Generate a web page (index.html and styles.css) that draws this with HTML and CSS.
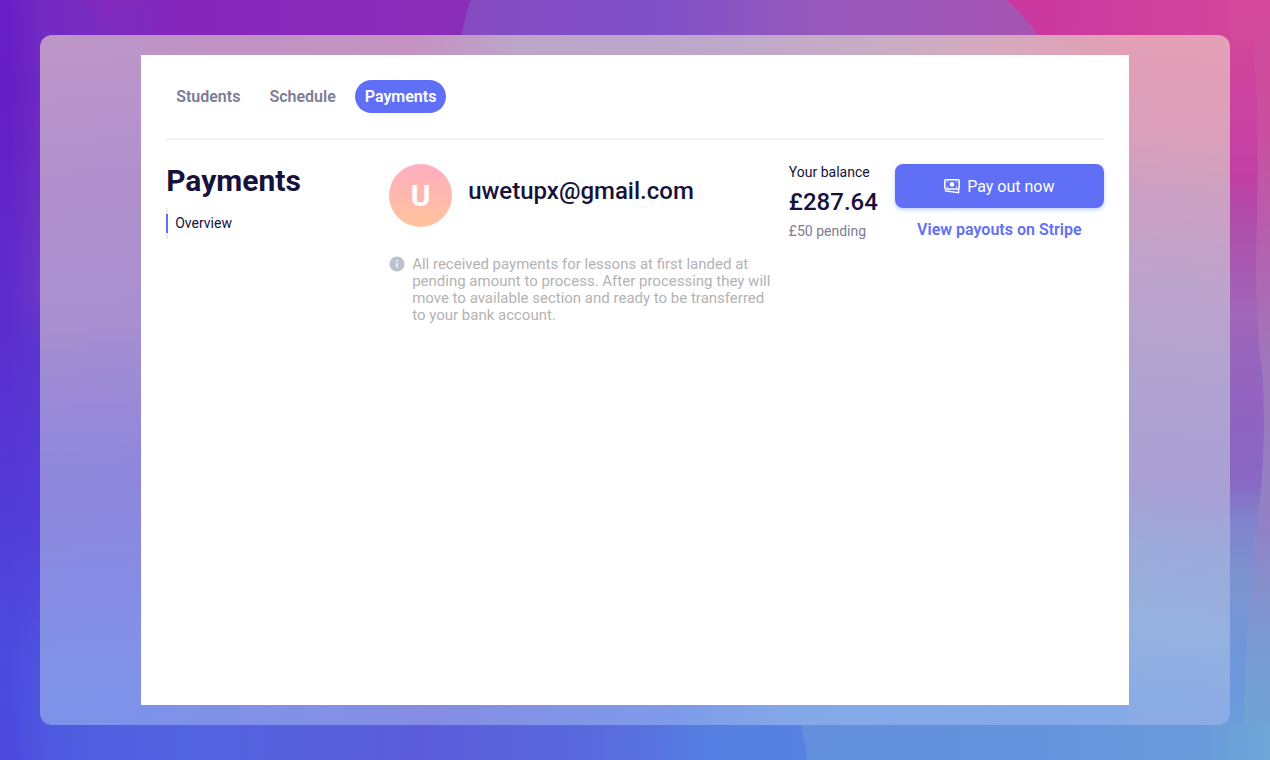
FILE: index.html
```html
<!DOCTYPE html>
<html lang="en">

<head>
    <meta charset="UTF-8" />
    <meta name="viewport" content="width=device-width, initial-scale=1" />
    <title>Payments</title>
    <link rel="stylesheet" href="styles.css">
</head>

<body>
    <!-- Wallpaper -->
    <svg class="wallpaper" viewBox="0 0 1270 760" preserveAspectRatio="none" aria-hidden="true">
        <defs>
            <linearGradient id="topColors" gradientUnits="userSpaceOnUse" x1="0" y1="0" x2="1270" y2="0">
                <stop offset="0" stop-color="#661cc6" />
                <stop offset="0.033" stop-color="#722ac3" />
                <stop offset="0.08" stop-color="#7a2cc0" />
                <stop offset="0.15" stop-color="#8526ba" />
                <stop offset="0.37" stop-color="#8a2eb8" />
            </linearGradient>
            <linearGradient id="topArc" gradientUnits="userSpaceOnUse" x1="460" y1="0" x2="1045" y2="0">
                <stop offset="0" stop-color="#864bc0" />
                <stop offset="0.32" stop-color="#7f50c8" />
                <stop offset="0.62" stop-color="#9659bb" />
                <stop offset="1" stop-color="#a654b2" />
            </linearGradient>
            <linearGradient id="pink" gradientUnits="userSpaceOnUse" x1="1020" y1="0" x2="1270" y2="20">
                <stop offset="0" stop-color="#c9379f" />
                <stop offset="1" stop-color="#d4489a" />
            </linearGradient>
            <linearGradient id="leftSide" x2="0" y2="1">
                <stop offset="0" stop-color="#681fc6" />
                <stop offset="0.12" stop-color="#651dc4" />
                <stop offset="0.4" stop-color="#5d2dcd" />
                <stop offset="0.68" stop-color="#523cd6" />
                <stop offset="0.86" stop-color="#4c4bde" />
                <stop offset="1" stop-color="#4c48e0" />
            </linearGradient>
            <linearGradient id="leftInner" x2="0" y2="1">
                <stop offset="0" stop-color="#722ac3" />
                <stop offset="0.15" stop-color="#6f2bc4" />
                <stop offset="0.38" stop-color="#6e38c4" />
                <stop offset="0.46" stop-color="#5c35d0" />
                <stop offset="0.7" stop-color="#533fd8" />
                <stop offset="0.9" stop-color="#5057e0" />
                <stop offset="1" stop-color="#4f57e0" />
            </linearGradient>
            <linearGradient id="fadeIn">
                <stop offset="0.2" stop-color="#000" />
                <stop offset="1" stop-color="#fff" />
            </linearGradient>
            <mask id="fadeInMask">
                <rect width="42" height="760" fill="url(#fadeIn)" />
            </mask>
            <linearGradient id="rightSide" x2="0" y2="1">
                <stop offset="0" stop-color="#d4489a" />
                <stop offset="0.18" stop-color="#c9509f" />
                <stop offset="0.3" stop-color="#b75fab" />
                <stop offset="0.48" stop-color="#9e78bb" />
                <stop offset="0.7" stop-color="#9083c5" />
                <stop offset="0.8" stop-color="#8094cf" />
                <stop offset="0.9" stop-color="#749fd4" />
                <stop offset="1" stop-color="#70a7d7" />
            </linearGradient>
            <linearGradient id="rightInner" x2="0" y2="1">
                <stop offset="0" stop-color="#d2469b" />
                <stop offset="0.2" stop-color="#c13fa4" />
                <stop offset="0.25" stop-color="#b14aaa" />
                <stop offset="0.4" stop-color="#9f66ba" />
                <stop offset="0.55" stop-color="#8f63c2" />
                <stop offset="0.64" stop-color="#8968c4" />
                <stop offset="0.7" stop-color="#8084cc" />
                <stop offset="0.8" stop-color="#7b95d1" />
                <stop offset="0.92" stop-color="#6c98db" />
                <stop offset="1" stop-color="#699ddb" />
            </linearGradient>
            <linearGradient id="bottomColors" gradientUnits="userSpaceOnUse" x1="0" y1="0" x2="1270" y2="0">
                <stop offset="0" stop-color="#4c48e0" />
                <stop offset="0.033" stop-color="#4f57e0" />
                <stop offset="0.07" stop-color="#505ee1" />
                <stop offset="0.15" stop-color="#5364e0" />
                <stop offset="0.33" stop-color="#5c5cda" />
                <stop offset="0.47" stop-color="#5a69de" />
                <stop offset="0.56" stop-color="#557fe2" />
                <stop offset="0.635" stop-color="#5882e0" />
            </linearGradient>
            <linearGradient id="bottomRight">
                <stop offset="0" stop-color="#638fdd" />
                <stop offset="0.5" stop-color="#6494dd" />
                <stop offset="0.85" stop-color="#699ada" />
                <stop offset="1" stop-color="#70a7d7" />
            </linearGradient>
        </defs>
        <rect width="1270" height="380" fill="url(#topColors)" />
        <path d="M80 0L106 20Q124 8 136 0L182 42Q160 16 142 0Z" fill="#8929b6" opacity="0.4" />
        <path d="M471 0H1100V380H440Q448 50 471 0Z" fill="url(#topArc)" />
        <path d="M1006 0H1270V380H1200Q1080 60 1006 0Z" fill="url(#pink)" />
        <rect x="1229" width="41" height="760" fill="url(#rightSide)" />
        <path d="M1229 40H1253Q1260 100 1256 260Q1256 330 1262 370Q1268 450 1256 530Q1246 620 1244 728H1229Z" fill="url(#rightInner)" />
        <rect width="42" height="760" fill="url(#leftSide)" />
        <rect width="42" height="760" fill="url(#leftInner)" mask="url(#fadeInMask)" />
        <rect y="715" x="42" width="1188" height="45" fill="url(#bottomColors)" />
        <path d="M798 715Q806 740 807 760H1270V724H1230V715Z" fill="url(#bottomRight)" />
    </svg>

    <div class="frame">
        <main class="panel">
            <nav class="tabs">
                <a href="#students">Students</a>
                <a href="#schedule">Schedule</a>
                <a href="#payments" class="active">Payments</a>
            </nav>

            <div class="content">
                <aside class="sidebar">
                    <h1>Payments</h1>
                    <ul>
                        <li><a href="#overview">Overview</a></li>
                    </ul>
                </aside>

                <section class="account">
                    <div class="profile">
                        <div class="avatar">U</div>
                        <h2>uwetupx@gmail.com</h2>
                    </div>
                    <div class="note">
                        <svg width="16" height="16" viewBox="0 0 16 16" aria-hidden="true">
                            <circle cx="8" cy="8" r="7.6" fill="#bcc3d0" />
                            <path d="M8 7.2V11.6" stroke="#fff" stroke-width="1.4" />
                            <circle cx="8" cy="4.9" r="0.9" fill="#fff" />
                        </svg>
                        <p>All received payments for lessons at first landed at pending amount to process. After processing they will move to available section and ready to be transferred to your bank account.</p>
                    </div>
                </section>

                <section class="balance">
                    <p>Your balance</p>
                    <strong>£287.64</strong>
                    <p class="pending">£50 pending</p>
                </section>

                <section class="actions">
                    <button type="button">
                        <svg width="16" height="16" viewBox="0 0 16 16" fill="none" stroke="#fff" aria-hidden="true">
                            <rect x="0.8" y="1.7" width="14.4" height="9.4" rx="1" stroke-width="1.5" />
                            <circle cx="8" cy="6.4" r="2.3" fill="#fff" stroke="none" />
                            <path d="M3.4 3.4v1.2M12.6 3.4v1.2M3.4 8.2v1.2M12.6 8.2v1.2" stroke-width="1.2" />
                            <path d="M0.8 12.7L14.6 14.7V11" stroke-width="1.4" />
                        </svg>
                        Pay out now
                    </button>
                    <a href="#stripe">View payouts on Stripe</a>
                </section>
            </div>
        </main>
    </div>
</body>

</html>
```
FILE: styles.css
```css
* {
    box-sizing: border-box;
}

body {
    margin: 0;
    min-height: 100vh;
    padding: 35px 40px;
    background-color: #5c35d0;
    color: #17123b;
    font-family: Roboto, sans-serif;
    font-size: 14px;
}

h1,
h2,
p,
ul {
    margin: 0;
    padding: 0;
}

a {
    text-decoration: none;
}

.wallpaper {
    position: fixed;
    inset: 0;
    width: 100%;
    height: 100%;
    z-index: -1;
}

.frame {
    min-height: calc(100vh - 70px);
    padding: 20px 0;
    border-radius: 12px;
    background:
        linear-gradient(90deg, #be93c5, #c493c2 28%, #bda4c9 38%, #bea7cb 58%, #c9adc4 75%, #d6a9bf 86%, #e3a0b5) center top / 83% 20px no-repeat,
        linear-gradient(90deg, #7c92e8, #8290e6 18%, #858de2 30%, #7e9ce9 55%, #83a8e8 66%, #84abe7) center bottom / 83% 20px no-repeat,
        linear-gradient(175deg, #be96c8, #b090cc 20%, #a78fd0 40%, #9889d8 51%, #8d87dc 62%, #868ce4 76%, #8092e8 87%, #7a91e8) left / 50% 100% no-repeat,
        linear-gradient(187deg, #e4a0b6, #dc9fb9 13%, #cba0c2 22%, #bda3cb 33%, #b1a3d0 46%, #a9a0d5 60%, #9daadb 68%, #95b1df 79%, #8cace5 88%, #86abe5) right / 50% 100% no-repeat;
}

.panel {
    width: 83%;
    min-height: calc(100vh - 110px);
    margin: 0 auto;
    padding: 25px;
    background: #fff;
}

.tabs {
    display: flex;
    gap: 9px;
    padding-bottom: 25px;
    border-bottom: 2px solid #f3f3f5;
}

.tabs a {
    padding: 0 10px;
    border-radius: 17px;
    color: #7e7c94;
    font-size: 16px;
    font-weight: 600;
    line-height: 33px;
}

.tabs .active {
    background: #6070f6;
    color: #fff;
}

.content {
    display: grid;
    grid-template-columns: 206px minmax(0, 1fr) auto 209px;
    column-gap: 17px;
    padding-top: 24px;
}

.sidebar h1 {
    font-size: 30px;
    line-height: 34px;
}

.sidebar ul {
    margin-top: 10px;
    padding: 6px 0;
    list-style: none;
    background: linear-gradient(#ececef, #ececef) left / 2px 100% no-repeat;
}

.sidebar li {
    padding-left: 7px;
    border-left: 2px solid #6070f6;
    line-height: 19px;
}

.sidebar a {
    color: #17123b;
}

.profile {
    display: flex;
    gap: 16px;
}

.avatar {
    width: 63px;
    height: 63px;
    border-radius: 50%;
    background: linear-gradient(#ffaec0, #ffc39c);
    color: #fff;
    font-size: 30px;
    font-weight: bold;
    line-height: 63px;
    text-align: center;
}

.profile h2 {
    font-size: 24px;
    font-weight: 500;
    line-height: 55px;
}

.note {
    display: flex;
    gap: 7px;
    margin-top: 29px;
    color: #b3b3b3;
    font-size: 15px;
    line-height: 17px;
}

.note svg {
    flex: none;
}

.balance {
    line-height: 17px;
}

.balance strong {
    display: block;
    margin: 8px 0;
    font-size: 24px;
    font-weight: 500;
    line-height: 26px;
}

.balance .pending {
    color: #7e7c94;
}

.actions {
    text-align: center;
}

.actions button {
    display: flex;
    align-items: center;
    justify-content: center;
    gap: 7px;
    width: 100%;
    height: 44px;
    border: none;
    border-radius: 8px;
    background: #6070f6;
    box-shadow: 0 2px 4px rgba(96, 140, 246, .4);
    color: #fff;
    font: 16px Roboto, sans-serif;
    cursor: pointer;
}

.actions a {
    display: block;
    margin-top: 12px;
    color: #6070f6;
    font-size: 16px;
    font-weight: 600;
    line-height: 20px;
}
```
